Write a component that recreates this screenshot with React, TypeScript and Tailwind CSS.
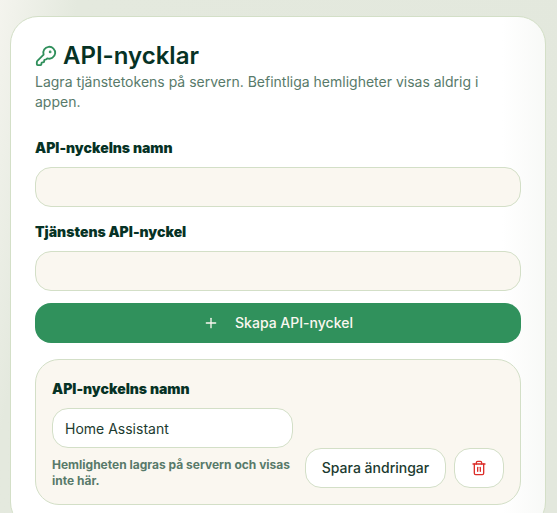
import { KeyRound, Plus, Trash2 } from 'lucide-react'

export default function App() {
  return (
    <div className="h-[513px] overflow-hidden bg-[linear-gradient(100deg,#f4f4ee_0%,#e4e9de_12%,#e3e8dd_100%)] pl-[10px] pr-[11px] pt-4 font-['Inter',sans-serif] text-[#063225]">
      <div className="rounded-[28px] border border-[#d3dfc7] bg-[linear-gradient(90deg,#ffffff_92%,#f8f9f7_100%)] p-6">
        <div className="flex items-center gap-[6px] h-[30px]">
          <KeyRound className="w-[22px] h-[22px] text-[#2f8f5b]" strokeWidth={2} />
          <h1 className="text-2xl leading-[30px] font-semibold text-[#063225]">API-nycklar</h1>
        </div>
        <p className="mt-[1px] text-sm leading-5 text-[#587a6a]">
          Lagra tjänstetokens på servern. Befintliga hemligheter visas aldrig i appen.
        </p>

        <label className="block mt-[26px] text-sm leading-5 font-black text-[#063225]">API-nyckelns namn</label>
        <input className="block mt-[9px] w-full h-10 rounded-2xl border border-[#d3dfc7] bg-[#faf7f0] px-3 text-sm outline-none" />

        <label className="block mt-[15px] text-sm leading-5 font-black text-[#063225]">Tjänstens API-nyckel</label>
        <input className="block mt-[9px] w-full h-10 rounded-2xl border border-[#d3dfc7] bg-[#faf7f0] px-3 text-sm outline-none" />

        <button className="mt-3 flex w-full h-10 items-center justify-center gap-4 rounded-2xl bg-[#30915c] text-sm font-medium text-[#faf7f0]">
          <Plus className="w-4 h-4" />
          <span>Skapa API-nyckel</span>
        </button>

        <div className="mt-4 rounded-3xl border border-[#d3dfc7] bg-[#faf7f0] px-4 pt-[19px] pb-[15px] flex items-end gap-3">
          <div className="w-[241px] shrink-0">
            <label className="block text-sm leading-5 font-black text-[#063225]">API-nyckelns namn</label>
            <input
              readOnly
              value="Home Assistant"
              className="block mt-[9px] w-full h-10 rounded-2xl border border-[#d3dfc7] bg-white px-3 text-sm text-[#1c3b2f] outline-none"
            />
            <p className="mt-[9px] text-xs leading-4 font-bold text-[#587a6a]">
              Hemligheten lagras på servern och visas inte här.
            </p>
          </div>
          <div className="flex gap-2 mb-px">
            <button className="h-10 w-[141px] rounded-2xl border border-[#d3dfc7] bg-white text-sm font-medium text-[#1c3b2f]">
              Spara ändringar
            </button>
            <button className="flex h-10 w-[50px] items-center justify-center rounded-2xl border border-[#d3dfc7] bg-white text-[#dc2f2a]">
              <Trash2 className="w-4 h-4" />
            </button>
          </div>
        </div>
      </div>
    </div>
  )
}
